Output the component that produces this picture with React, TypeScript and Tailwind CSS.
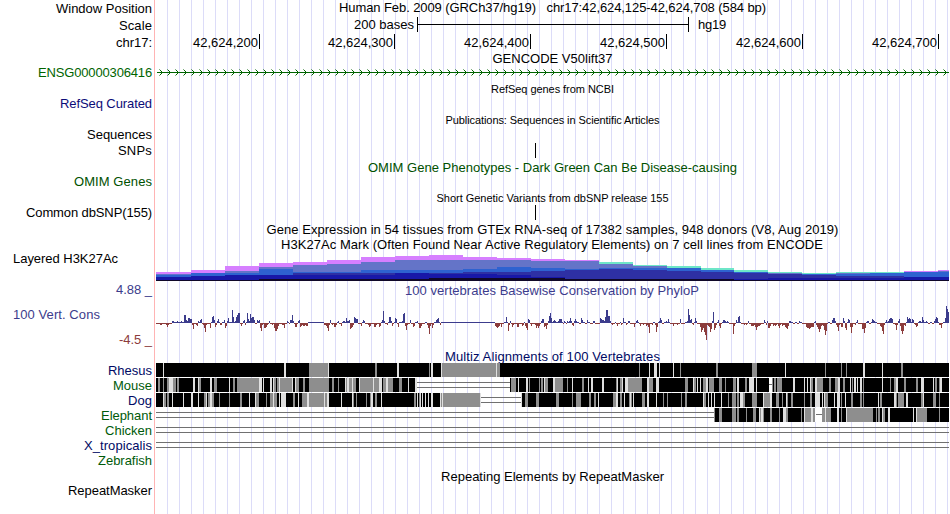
import { useLayoutEffect, useRef } from "react";
import type { ReactNode } from "react";

// Text that spreads its letters so that the line is exactly `w` pixels wide.
function Fit({ w, children }: { w: number; children: string }) {
  const ref = useRef<HTMLSpanElement>(null);
  useLayoutEffect(() => {
    const el = ref.current;
    if (!el) return;
    el.style.letterSpacing = "0px";
    const natural = el.getBoundingClientRect().width;
    const gap = (w - natural) / children.length;
    el.style.letterSpacing = `${gap}px`;
  }, [w, children]);
  return (
    <span ref={ref} className="inline-block whitespace-pre">
      {children}
    </span>
  );
}

const LABELS: { text: string; w: number; cls: string }[] = [
  { text: "Window Position", w: 96, cls: "h-[17px]" },
  { text: "Scale", w: 33, cls: "h-[17px]" },
  { text: "chr17:", w: 36, cls: "h-[30px]" },
  { text: "ENSG00000306416", w: 114, cls: "h-[31px] text-[#006400]" },
  { text: "RefSeq Curated", w: 92, cls: "h-[31px] text-[#0c0c78]" },
  { text: "Sequences", w: 65, cls: "h-[16px]" },
  { text: "SNPs", w: 34, cls: "h-[31px]" },
  { text: "OMIM Genes", w: 78, cls: "h-[31px] text-[#005000]" },
  { text: "Common dbSNP(155)", w: 126, cls: "h-[46px]" },
  { text: "Layered H3K27Ac", w: 105, cls: "h-[31px] pr-[36px]" },
  { text: "4.88 _", w: 36, cls: "h-[25px] text-[#3c3c8c]" },
  { text: "100 Vert. Cons", w: 87, cls: "h-[25px] pr-[54px] text-[#3c3c8c]" },
  { text: "-4.5 _", w: 33, cls: "h-[31px] text-[#8c3c3c]" },
  { text: "Rhesus", w: 44, cls: "h-[15px] text-[#000a64]" },
  { text: "Mouse", w: 39, cls: "h-[15px] text-[#005a0a]" },
  { text: "Dog", w: 24, cls: "h-[15px] text-[#000a64]" },
  { text: "Elephant", w: 51, cls: "h-[15px] text-[#005a0a]" },
  { text: "Chicken", w: 47, cls: "h-[15px] text-[#005a0a]" },
  { text: "X_tropicalis", w: 68, cls: "h-[15px] text-[#000a64]" },
  { text: "Zebrafish", w: 54, cls: "h-[30px] text-[#005a0a]" },
  { text: "RepeatMasker", w: 84, cls: "h-[31px]" },
];

const TICKS = [
  { text: "42,624,200", cls: "w-[105px]" },
  { text: "42,624,300", cls: "w-[135px]" },
  { text: "42,624,400", cls: "w-[136px]" },
  { text: "42,624,500", cls: "w-[136px]" },
  { text: "42,624,600", cls: "w-[136px]" },
  { text: "42,624,700", cls: "w-[136px]" },
];

const P = "#d67fff";
const T = "#6ee6c8";
const S = "#6474c8";
const B = "#2e62d0";
const M = "#2e30a4";
const N = "#1818a8";
const K = "#100828";

// Each step: left edge, then the layers from top to bottom as [top, colour].
const H3K27: [number, [number, string][]][] = [
  [156, [[272, P], [274, S], [275, B], [277, N], [280, K]]],
  [191, [[270, P], [273, B], [276, N], [280, K]]],
  [225, [[266, P], [271, S], [273, B], [275, N], [280, K]]],
  [259, [[263, P], [267, S], [269, B], [275, N], [279, K]]],
  [293, [[262, P], [265, S], [272, B], [273, M], [275, N], [279, K]]],
  [327, [[260, P], [264, S], [272, B], [273, M], [275, N], [279, K]]],
  [361, [[257, P], [262, S], [270, B], [273, M], [275, N], [279, K]]],
  [395, [[256, P], [260, S], [270, B], [273, N], [279, K]]],
  [429, [[255, P], [260, S], [270, B], [273, M], [274, N], [278, K]]],
  [463, [[257, P], [260, S], [269, B], [272, M], [274, N], [278, K]]],
  [497, [[258, P], [260, S], [267, B], [272, M], [275, N], [278, K]]],
  [531, [[259, P], [261, S], [268, B], [271, M], [277, N], [278, K]]],
  [565, [[260, P], [261, S], [269, B], [270, M], [279, K]]],
  [599, [[262, T], [264, S], [268, B], [269, M], [279, K]]],
  [633, [[265, T], [266, S], [268, B], [270, M], [279, K]]],
  [667, [[266, T], [268, B], [271, M], [279, K]]],
  [701, [[268, T], [270, B], [272, M], [279, K]]],
  [734, [[270, T], [272, B], [273, M], [279, N], [280, K]]],
  [768, [[272, T], [273, S], [274, M], [278, N], [280, K]]],
  [802, [[273, T], [274, B], [275, M], [278, N], [280, K]]],
  [836, [[272, T], [273, S], [274, B], [276, M], [278, N], [280, K]]],
  [870, [[272, T], [273, B], [276, M], [278, N], [280, K]]],
  [904, [[271, P], [272, B], [277, N], [280, K]]],
  [938, [[270, P], [271, S], [272, B], [277, N], [280, K]]],
];

// Basewise conservation as "position:score"; bases in between score ±1.
const PHYLOP =
  "156:-1 160:-2 161:-2 162:-1 166:-2 167:-4 168:-2 169:-1 172:2 173:2 177:2 181:2 182:1 184:8 185:8 186:3 187:2 188:5 189:5 190:4 191:4 192:-2 193:-6 194:-1 196:-2 197:-3 198:2 199:1 200:3 201:4 202:-1 203:-2 204:-5 205:-9 206:-2 207:-1 210:-5 211:1 212:6 213:7 214:3 215:-4 216:-2 217:2 218:4 219:1 220:-2 221:-2 222:1 224:3 225:-5 226:-3 227:2 228:5 229:1 231:1 232:13 233:6 234:1 235:2 236:6 237:8 238:10 239:10 240:-1 241:-3 242:-1 243:2 244:3 245:-2 246:1 247:10 248:4 249:2 250:9 251:5 252:6 253:6 254:3 255:-1 257:3 258:2 259:3 260:-5 261:-8 262:-2 264:-5 265:-5 266:-4 267:-2 268:-1 269:2 270:-1 272:-2 274:-5 275:-8 276:-8 277:-6 278:-3 279:-1 282:-2 283:-2 284:-5 285:-1 287:2 288:1 289:-1 290:3 291:3 292:8 293:2 294:-1 295:-4 296:-4 297:-1 298:2 299:3 300:-4 301:-3 302:-2 303:-3 304:-3 305:-2 306:-3 307:-3 308:1 324:-2 325:-2 326:-3 327:-5 328:-8 329:-2 330:3 331:-1 332:-2 334:-4 335:-4 336:-2 337:1 338:2 339:-1 341:-3 342:1 343:2 344:2 346:5 347:2 348:2 349:3 350:-6 351:-5 352:-4 353:-2 354:6 355:5 356:4 357:4 358:-1 361:-3 362:1 363:3 364:2 365:-1 368:-2 369:-4 370:-3 371:-1 374:-4 375:-4 376:-2 377:-1 379:-4 380:-3 381:1 382:3 383:12 384:2 385:-1 387:-2 388:1 389:6 390:6 391:2 392:-3 393:-1 394:1 395:5 396:4 397:-1 398:-4 399:1 402:2 403:9 404:10 405:-3 406:-7 407:-2 408:-1 410:3 411:-1 413:-4 414:-3 415:1 417:2 418:-1 419:-5 420:-5 421:-3 422:-1 425:1 427:-2 428:-5 429:-11 430:-3 431:-1 432:-5 433:-2 434:1 436:3 437:4 438:5 439:1 440:-2 441:1 495:-3 496:-4 497:-5 498:-4 499:-3 500:-1 501:-4 502:-1 504:1 506:6 507:1 508:-8 509:-2 510:2 511:-1 512:-4 513:-2 514:-1 517:-4 518:-4 519:-1 522:-3 523:-2 524:1 525:-3 526:-5 527:-7 528:4 529:3 530:-1 531:-3 532:-1 535:-2 536:-5 537:-3 538:-5 539:-3 540:-1 541:2 542:4 543:4 544:-4 545:-3 546:-6 547:-2 548:2 549:7 550:10 551:5 552:1 553:2 554:3 555:2 556:1 558:2 559:4 560:4 561:4 562:1 563:-1 564:2 566:-1 567:2 568:1 569:2 570:5 571:2 572:-2 573:-3 574:2 575:4 576:2 577:1 579:-1 581:5 582:3 583:1 585:-1 587:3 588:1 590:-1 593:2 594:2 595:-1 600:5 601:4 602:3 603:3 604:2 605:6 606:13 607:13 608:7 609:7 610:2 611:-1 612:-2 615:1 616:-1 617:-3 618:-1 620:1 621:-2 623:5 624:1 626:-2 628:2 629:2 630:-1 633:-1 634:-4 635:-1 636:2 637:3 638:1 639:-1 640:-3 641:-1 643:-2 646:-3 647:-2 648:-4 649:-10 650:-1 651:-1 652:-2 653:1 655:-2 656:-9 657:-4 658:1 659:2 660:5 661:3 662:-1 664:1 666:2 668:4 669:1 670:-1 673:-3 674:-1 677:-2 680:4 681:-1 685:1 687:2 688:14 689:8 690:3 691:4 692:-1 693:-2 694:1 695:5 696:2 697:-1 700:-4 701:-9 702:-7 703:-5 704:-9 705:-12 706:-17 707:-2 708:-3 709:-4 710:-9 711:-6 712:2 713:11 714:-7 715:-5 716:-2 717:1 718:3 719:-3 720:-5 721:-1 722:1 723:3 724:3 725:2 727:2 728:1 729:-1 733:-11 734:-3 735:-1 736:3 737:1 738:6 739:7 740:1 741:-1 744:-2 746:-2 748:2 749:-1 751:-3 752:-3 753:-3 754:-2 755:-4 756:-7 757:-4 758:-3 759:-3 760:-2 761:-1 764:3 765:1 766:-2 767:2 768:-5 769:-5 770:-3 771:-1 773:-3 774:-2 775:-3 776:-2 778:-3 779:-5 780:-2 781:-1 782:-3 783:-2 784:-2 785:-4 786:-5 787:-6 788:-3 789:2 790:2 791:1 793:-1 795:1 797:-1 799:2 800:1 802:-1 806:-4 807:-5 808:-5 809:-6 810:-5 811:-4 812:-4 813:-4 814:1 815:2 816:-2 817:-4 818:-6 819:-9 820:-6 821:-3 822:-2 823:-3 824:-7 825:-12 826:-8 827:-1 828:1 830:-1 832:3 833:5 834:5 835:2 836:-2 837:-4 838:-8 839:-2 841:-4 842:-4 843:5 844:2 845:-5 846:-7 847:1 848:4 849:3 850:-4 851:-10 852:-4 853:-1 855:-2 856:1 857:3 858:-1 862:-6 863:-6 864:-10 865:-5 866:1 867:2 868:2 869:-1 871:1 872:4 873:3 874:2 875:1 877:-1 880:-3 881:-4 882:-8 883:-11 884:-2 885:1 886:3 887:1 888:2 889:4 890:5 891:5 892:4 893:-1 894:-1 895:-2 896:-7 897:-2 898:2 899:4 900:-3 901:-8 902:-11 903:-8 904:-2 905:-3 906:1 907:6 908:4 909:5 910:4 911:1 912:4 913:3 914:-1 915:-2 916:-4 917:-3 918:1 919:2 920:2 922:6 923:3 924:1 926:2 927:1 928:-1 930:1 932:-1 934:2 935:4 936:6 937:5 938:1 939:-2 940:-2 941:-5 942:-1 943:1 945:5 946:17 947:14 948:11";

function phyloBars() {
  const points = PHYLOP.split(" ").map((p) => p.split(":").map(Number));
  return points.flatMap(([x, v], i) => {
    const next = i + 1 < points.length ? points[i + 1][0] : 949;
    const fill = v > 0 ? "#3c3c8c" : "#8c3c3c";
    const bars = [
      <rect key={x} x={x} y={v > 0 ? 323 - v : 323} width={1} height={Math.abs(v)} fill={fill} />,
    ];
    if (next > x + 1) {
      bars.push(
        <rect key={`f${x}`} x={x + 1} y={v > 0 ? 322 : 323} width={next - x - 1} height={1} fill={fill} />,
      );
    }
    return bars;
  });
}

// Marks on an alignment: g = weak match, l = very weak match, w = gap; then start and width.
const ALIGN: { y: number; solid: [number, number][]; marks: string }[] = [
  {
    y: 363,
    solid: [[156, 949]],
    marks:
      "l163,1 l284,2 g309,19 l328,1 g375,2 l397,2 g429,1 l431,2 l441,1 g442,54 l496,1 g497,3 g639,1 l649,1 l654,3 l659,1 l673,1 g680,1 g716,2 g752,5 l785,1 g825,1 g841,1 g846,1 l863,2 l882,1 g901,2",
  },
  {
    y: 378,
    solid: [[156, 417], [510, 949]],
    marks:
      "g158,2 g163,1 g167,2 l169,4 g173,3 g177,2 l193,2 l198,1 g199,2 l210,2 g214,3 l229,1 g233,2 g237,1 g238,21 l259,3 l263,1 l270,2 l273,1 g274,2 g277,2 l279,1 g280,12 l292,1 l295,1 g296,3 g303,2 g309,20 g332,2 g338,1 l345,1 g346,1 l347,2 g349,3 l352,1 g353,3 l359,1 g360,13 l373,1 g374,5 l379,3 g383,1 g384,2 l386,1 l387,1 g388,5 g399,3 l408,1 l415,2 g511,5 l518,1 l526,2 g529,1 g539,1 g541,2 l544,1 g545,3 l553,2 g555,8 g567,1 l572,1 g582,2 l588,1 l591,2 l602,2 g616,1 l617,1 g620,2 l622,1 l625,3 g628,14 l647,2 g649,4 l656,3 g685,3 l693,1 g694,2 l697,1 l700,1 g703,3 l706,2 g709,5 g719,3 g725,1 g733,3 l737,2 g745,2 l749,1 l750,4 l756,1 w769,3 g772,1 g774,2 g777,5 l793,2 l804,1 l807,1 l810,1 g811,2 l815,2 g817,6 g829,2 g835,3 l838,2 g843,2 l850,1 g852,1 l854,2 l857,1 l860,2 g863,1 l882,1 g890,1 g894,2 l896,2 g904,2 g916,2 l921,3 l933,1 g935,2 g939,1 l940,2",
  },
  {
    y: 393,
    solid: [[156, 481], [521, 949]],
    marks:
      "l163,1 g164,2 g167,2 l172,1 l183,1 l191,2 l198,1 g204,2 l206,1 g208,2 l210,2 g212,2 g219,1 g229,1 g240,2 l249,1 l255,1 g256,3 g266,1 g270,3 l273,1 g274,3 l279,1 l281,5 g293,2 l298,1 g302,5 l307,2 g309,15 l324,1 g325,2 l327,2 l341,1 l352,1 g353,1 g356,1 g366,1 g370,1 l371,2 g375,2 l381,1 g414,2 l417,1 g419,1 l420,1 l422,1 l425,1 l428,1 l431,2 l440,1 g441,1 l442,1 g443,37 l480,1 l521,1 g525,3 g536,3 g556,3 g572,1 g576,5 g589,2 g594,2 l598,1 g613,3 l616,2 g620,2 l624,1 g629,1 l630,1 g631,1 l633,1 g642,3 l647,2 l656,1 g663,1 g667,1 g681,1 g685,2 l703,1 g704,2 l708,1 l711,1 l714,1 l721,1 g728,1 g732,4 g737,2 l740,3 g743,2 g752,2 g754,3 l763,1 g764,6 l770,2 g776,3 g782,1 l786,1 g787,1 g791,2 g804,1 g810,2 l815,5 l822,1 l824,1 g825,3 l834,1 l837,3 g841,1 l845,1 g851,2 g860,2 g863,1 l878,1 g880,2 l894,2 g896,1 g898,6 l906,2 g921,2 l923,1 g933,3 g939,1",
  },
  {
    y: 408,
    solid: [[714, 949]],
    marks:
      "g714,1 g719,3 g732,4 g737,2 g746,1 g753,3 l759,1 g760,1 l761,2 g763,1 g770,2 g779,1 l783,3 g786,2 g801,1 l804,1 g805,6 l811,2 g813,2 w815,7 g822,9 l825,1 l837,2 g841,1 l846,1 g847,26 g876,1 g878,2 l882,1 g883,2 l888,2 l913,1 l916,1 g917,10 g939,1",
  },
];

const MARK_FILL: Record<string, string> = { g: "#8e8e8e", l: "#dfdfdf", w: "#ffffff" };

// Double lines across unaligned stretches: left edge, right edge, upper line.
const UNALIGNED = [
  [417, 510, 382],
  [481, 521, 397],
  [156, 714, 412],
  [156, 949, 427],
  [156, 949, 442],
];

function Plot({ top, height, children }: { top: number; height: number; children: ReactNode }) {
  return (
    <svg
      width={795}
      height={height}
      viewBox={`155 ${top} 795 ${height}`}
      shapeRendering="crispEdges"
      className="block shrink-0"
    >
      {children}
    </svg>
  );
}

export default function App() {
  return (
    <div className="flex h-[514px] w-[950px] overflow-hidden bg-white text-[13px] leading-[15px] text-black [font-family:'Liberation_Sans',Arial,sans-serif]">
      <div className="flex w-[154px] shrink-0 flex-col pt-px">
        {LABELS.map((l) => (
          <div key={l.text} className={`shrink-0 text-right ${l.cls.includes("pr-") ? "" : "pr-[2px]"} ${l.cls}`}>
            <Fit w={l.w}>{l.text}</Fit>
          </div>
        ))}
      </div>
      <div className="w-px shrink-0 bg-[#ffb4b4]" />
      <div className="flex w-[795px] shrink-0 flex-col text-center [background-image:linear-gradient(to_right,#fff_1px,transparent_1px),linear-gradient(to_right,#dcdcf8_1px,transparent_1px)] [background-size:100%_100%,12px_100%] [background-repeat:no-repeat,repeat]">
        <div className="h-[17px]">
          <Fit w={427}>{"Human Feb. 2009 (GRCh37/hg19)   chr17:42,624,125-42,624,708 (584 bp)"}</Fit>
        </div>
        <div className="flex h-[17px]">
          <div className="w-[262px] pr-[3px] text-right">
            <Fit w={60}>200 bases</Fit>
          </div>
          <div className="flex h-[15px] w-[272px] items-center border-x border-black">
            <div className="h-px w-full bg-black" />
          </div>
          <div className="pl-[9px]">
            <Fit w={28}>hg19</Fit>
          </div>
        </div>
        <div className="flex h-[15px]">
          {TICKS.map((t) => (
            <div key={t.text} className={`shrink-0 border-r border-black pt-px pr-px text-right ${t.cls}`}>
              <Fit w={65}>{t.text}</Fit>
            </div>
          ))}
        </div>
        <div className="mt-[2px] h-[15px]">
          <Fit w={120}>GENCODE V50lift37</Fit>
        </div>
        <Plot top={66} height={14}>
          <rect x={157} y={72} width={792} height={1} fill="#006400" />
          {Array.from({ length: 99 }, (_, i) => (
            <path
              key={i}
              d={`M${159.5 + i * 8} 69.5l3 3l-3 3`}
              fill="none"
              stroke="#006400"
              strokeWidth={1}
              shapeRendering="geometricPrecision"
            />
          ))}
        </Plot>
        <div className="mt-[2px] h-[15px] text-[11px]">
          <Fit w={123}>RefSeq genes from NCBI</Fit>
        </div>
        <div className="mt-[16px] h-[15px] text-[11px]">
          <Fit w={214}>Publications: Sequences in Scientific Articles</Fit>
        </div>
        <div className="mt-[15px] ml-[380px] h-[15px] w-px bg-black" />
        <div className="mt-[2px] h-[15px] text-[#005000]">
          <Fit w={369}>OMIM Gene Phenotypes - Dark Green Can Be Disease-causing</Fit>
        </div>
        <div className="mt-[16px] h-[14px] text-[11px]">
          <Fit w={232}>Short Genetic Variants from dbSNP release 155</Fit>
        </div>
        <div className="ml-[380px] h-[15px] w-px bg-black" />
        <div className="mt-[2px] h-[15px]">
          <Fit w={572}>Gene Expression in 54 tissues from GTEx RNA-seq of 17382 samples, 948 donors (V8, Aug 2019)</Fit>
        </div>
        <div className="h-[15px] pr-px">
          <Fit w={542}>H3K27Ac Mark (Often Found Near Active Regulatory Elements) on 7 cell lines from ENCODE</Fit>
        </div>
        <Plot top={252} height={31}>
          {H3K27.map(([x, layers], i) => {
            const right = i + 1 < H3K27.length ? H3K27[i + 1][0] : 949;
            return layers.map(([y, fill]) => (
              <rect key={`${x}-${y}`} x={x} y={y} width={right - x} height={281 - y} fill={fill} />
            ));
          })}
        </Plot>
        <div className="h-[15px] pr-px text-[#3c3c8c]">
          <Fit w={294}>100 vertebrates Basewise Conservation by PhyloP</Fit>
        </div>
        <Plot top={298} height={51}>
          {phyloBars()}
        </Plot>
        <div className="h-[14px] text-[#000a64]">
          <Fit w={215}>Multiz Alignments of 100 Vertebrates</Fit>
        </div>
        <Plot top={363} height={106}>
          {ALIGN.map((row) => (
            <g key={row.y}>
              {row.solid.map(([a, b]) => (
                <rect key={a} x={a} y={row.y} width={b - a} height={14} fill="#000" />
              ))}
              {row.marks.split(" ").map((m) => {
                const [x, w] = m.slice(1).split(",").map(Number);
                return <rect key={m} x={x} y={row.y} width={w} height={14} fill={MARK_FILL[m[0]]} />;
              })}
            </g>
          ))}
          {UNALIGNED.map(([a, b, y]) => (
            <g key={y} fill="#707070">
              <rect x={a} y={y} width={b - a} height={1} />
              <rect x={a} y={y + 5} width={b - a} height={1} />
            </g>
          ))}
          <rect x={769} y={384} width={3} height={1} fill="#707070" />
          <rect x={816} y={414} width={6} height={1} fill="#707070" />
        </Plot>
        <div className="h-[15px]">
          <Fit w={223}>Repeating Elements by RepeatMasker</Fit>
        </div>
      </div>
    </div>
  );
}
